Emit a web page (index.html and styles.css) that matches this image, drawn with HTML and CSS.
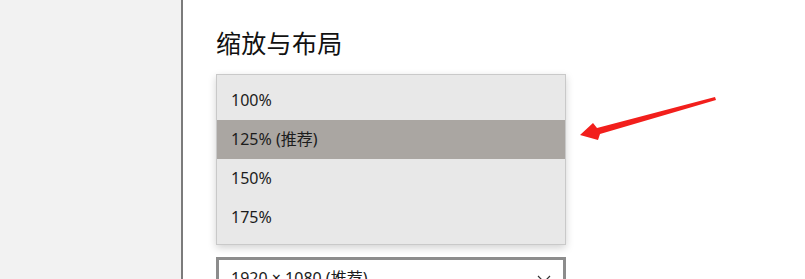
FILE: index.html
```html
<!DOCTYPE html>
<html lang="zh">
<head>
<meta charset="utf-8">
<link rel="stylesheet" href="styles.css">
</head>
<body>
<div class="app">
  <aside class="sidebar"></aside>
  <main class="main">
    <h2 class="title">缩放与布局</h2>
    <div class="popup">
      <div class="item">100%</div>
      <div class="item selected">125% (推荐)</div>
      <div class="item">150%</div>
      <div class="item">175%</div>
    </div>
    <div class="select">
      <span>1920 × 1080 (推荐)</span>
      <svg class="chev" width="14" height="8" viewBox="0 0 14 8"><path d="M1 1 L7 7 L13 1" fill="none" stroke="#333" stroke-width="1.2"/></svg>
    </div>
  </main>
</div>
<svg class="arrow" width="805" height="279" viewBox="0 0 805 279">
  <polygon points="580,135 593,123 597,128 715,97 716,100 600,134 598,140" fill="#f21f1c"/>
</svg>
</body>
</html>
```
FILE: styles.css
```css
html, body {
  margin: 0;
  padding: 0;
  width: 805px;
  height: 279px;
  overflow: hidden;
  background: #ffffff;
  font-family: "Noto Sans", "Noto Sans CJK SC", sans-serif;
}
.app {
  display: flex;
  height: 279px;
}
.sidebar {
  width: 181px;
  flex: none;
  background: #f2f2f2;
  border-right: 2px solid #7b7b7b;
}
.main {
  flex: 1;
  padding-left: 33px;
  padding-top: 25px;
}
.title {
  margin: 0;
  font-family: "Noto Sans CJK SC", sans-serif;
  font-weight: 400;
  font-size: 25px;
  line-height: 35px;
  color: #111;
  letter-spacing: 0.3px;
}
.popup {
  margin-top: 14px;
  width: 348px;
  background: #e8e8e8;
  border: 1px solid #c9c9c9;
  box-shadow: 0 3px 8px rgba(0,0,0,0.18);
  padding: 6px 0 7px;
}
.item {
  height: 39px;
  line-height: 39px;
  padding-left: 14px;
  font-size: 16px;
  color: #1c1c1c;
}
.item.selected {
  background: #aaa6a2;
}
.select {
  margin-top: 12px;
  height: 40px;
  border: 3px solid #8c8c8c;
  display: flex;
  align-items: flex-start;
  justify-content: space-between;
  padding: 5px 12px 0 12px;
  box-sizing: border-box;
  width: 350px;
  font-size: 16px;
  color: #1c1c1c;
}
.chev {
  margin-top: 10px;
}
.arrow {
  position: absolute;
  left: 0;
  top: 0;
  pointer-events: none;
}
```
